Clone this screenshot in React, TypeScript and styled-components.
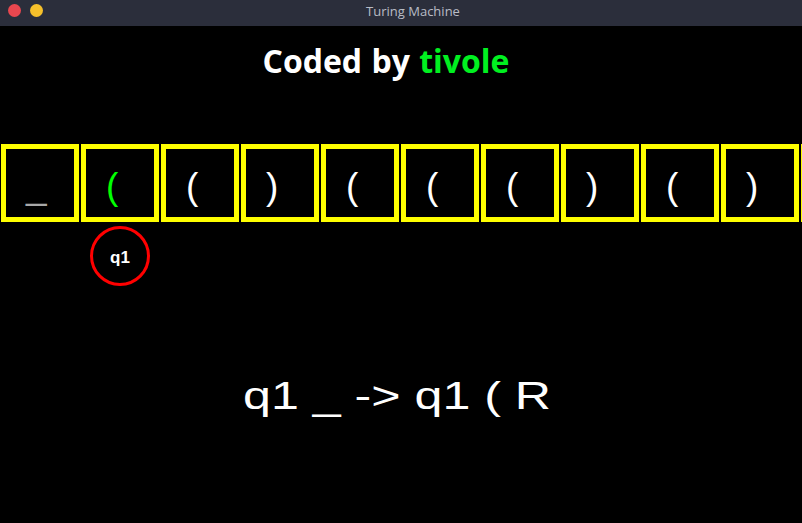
import styled, { createGlobalStyle } from "styled-components";

const GlobalStyle = createGlobalStyle`
  html, body {
    margin: 0;
    padding: 0;
    background: #000;
  }
`;

// the visible part of the tape; the last cell runs off the right edge
const tape = ["_", "(", "(", ")", "(", "(", "(", ")", "(", ")", ""];
const head = 1;
const CELL = 78;
const GAP = 2;

const App = () => {
  return (
    <Window>
      <GlobalStyle />
      <TitleBar>
        <Lights>
          <Light color="#e9474f" />
          <Light color="#f5c02b" />
        </Lights>
        <Title>Turing Machine</Title>
      </TitleBar>
      <Screen>
        <Header>
          Coded by <Author>tivole</Author>
        </Header>
        <Tape>
          {tape.map((symbol, i) => (
            <Cell key={i}>
              <Symbol active={i === head} blank={symbol === "_"}>
                {symbol}
              </Symbol>
            </Cell>
          ))}
        </Tape>
        <HeadRow>
          <Head style={{ marginLeft: 1 + head * (CELL + GAP) + (CELL - 60) / 2 }}>
            q1
          </Head>
        </HeadRow>
        <Rule>q1 _ -&gt; q1 ( R</Rule>
      </Screen>
    </Window>
  );
};

export default App;

const Window = styled.div`
  width: 802px;
  height: 523px;
  background: #000;
  display: flex;
  flex-direction: column;
  overflow: hidden;
`;

const TitleBar = styled.div`
  height: 26px;
  flex: none;
  background: #2b2e3b;
  display: flex;
  align-items: center;
  position: relative;
`;

const Lights = styled.div`
  display: flex;
  gap: 9px;
  padding-left: 8px;
  margin-top: -6px;
`;

const Light = styled.span<{ color: string }>`
  width: 13px;
  height: 13px;
  border-radius: 50%;
  background: ${(p) => p.color};
`;

const Title = styled.div`
  position: absolute;
  left: 0;
  right: 0;
  top: 3px;
  padding-left: 24px;
  text-align: center;
  font-family: "Open Sans", "DejaVu Sans", sans-serif;
  font-size: 13px;
  color: #b9bcc6;
  line-height: 16px;
`;

const Screen = styled.div`
  flex: 1;
  display: flex;
  flex-direction: column;
`;

const Header = styled.div`
  margin-top: 15px;
  height: 40px;
  line-height: 40px;
  text-align: center;
  padding-right: 30px;
  font-family: "Open Sans", sans-serif;
  font-weight: 700;
  font-size: 32px;
  color: #fff;
  word-spacing: 1px;
  letter-spacing: 0;
`;

const Author = styled.span`
  color: #00f020;
`;

const Tape = styled.div`
  margin-top: 63px;
  display: flex;
  gap: ${GAP}px;
  padding-left: 1px;
`;

const Cell = styled.div`
  flex: none;
  width: ${CELL}px;
  height: ${CELL}px;
  box-sizing: border-box;
  border: 5px solid #ffff00;
  padding: 6px 0 0 20px;
`;

const Symbol = styled.span<{ active: boolean; blank: boolean }>`
  display: block;
  font-family: "Liberation Sans", Arial, sans-serif;
  font-size: 37px;
  line-height: 64px;
  color: ${(p) => (p.active ? "#00ff00" : p.blank ? "#a8a8a8" : "#fff")};
`;

const HeadRow = styled.div`
  margin-top: 4px;
  display: flex;
`;

const Head = styled.div`
  width: 60px;
  height: 60px;
  box-sizing: border-box;
  border: 3px solid #ff0000;
  border-radius: 50%;
  display: flex;
  align-items: center;
  justify-content: center;
  font-family: "Liberation Sans", Arial, sans-serif;
  font-weight: 700;
  font-size: 17px;
  color: #fff;
  padding-top: 4px;
`;

const Rule = styled.div`
  margin-top: 88px;
  text-align: center;
  font-family: "Liberation Sans", Arial, sans-serif;
  font-size: 38px;
  line-height: 44px;
  color: #fff;
  transform: scaleX(1.32);
  padding-right: 6px;
`;
